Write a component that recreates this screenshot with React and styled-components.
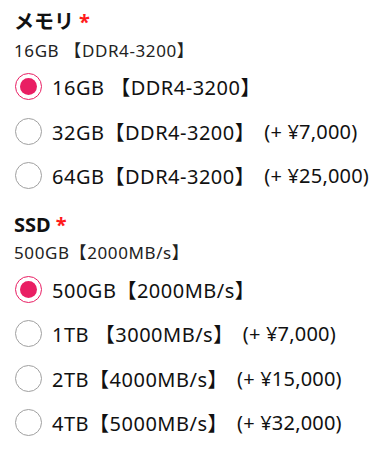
import React, { useState } from 'react';
import styled, { createGlobalStyle } from 'styled-components';

const GlobalStyle = createGlobalStyle`
  body {
    margin: 0;
    background: #ffffff;
    font-family: "Noto Sans", "Noto Sans CJK JP", sans-serif;
    color: #1a1a1a;
  }
`;

const Page = styled.div`
  padding: 8px 14px 0 14px;
`;

const Section = styled.div`
  margin-bottom: 12.5px;
`;

const Title = styled.div`
  font-size: 20px;
  font-weight: 700;
  line-height: 28px;
  color: #111;
  display: flex;
  align-items: center;
`;

const Required = styled.span`
  color: #ff1a1a;
  margin-left: 5px;
  font-weight: 700;
`;

const Current = styled.div`
  font-size: 17px;
  line-height: 22px;
  margin-top: 3.5px;
  margin-bottom: 3px;
  color: #222;
  letter-spacing: 0.6px;
`;

const OptionRow = styled.label`
  display: flex;
  align-items: center;
  height: 44.5px;
  cursor: pointer;
  font-size: 20px;
  letter-spacing: 0.5px;
  color: #111;
  white-space: nowrap;
`;

const Radio = styled.span`
  box-sizing: border-box;
  width: 27px;
  height: 27px;
  border-radius: 50%;
  border: 1px solid ${(p) => (p.$checked ? '#e91e63' : '#a0a0a0')};
  display: flex;
  align-items: center;
  justify-content: center;
  margin-left: 1px;
  margin-right: 10px;
  flex-shrink: 0;

  &::after {
    content: '';
    width: 17px;
    height: 17px;
    border-radius: 50%;
    background: #e91e63;
    display: ${(p) => (p.$checked ? 'block' : 'none')};
  }
`;

const Price = styled.span`
  margin-left: 9px;
  letter-spacing: 0.2px;
`;

const groups = [
  {
    id: 'memory',
    title: 'メモリ',
    options: [
      { label: '16GB 【DDR4-3200】', price: null },
      { label: '32GB【DDR4-3200】', price: '(+ ¥7,000)' },
      { label: '64GB【DDR4-3200】', price: '(+ ¥25,000)' },
    ],
  },
  {
    id: 'ssd',
    title: 'SSD',
    options: [
      { label: '500GB【2000MB/s】', price: null },
      { label: '1TB 【3000MB/s】', price: '(+ ¥7,000)' },
      { label: '2TB【4000MB/s】', price: '(+ ¥15,000)' },
      { label: '4TB【5000MB/s】', price: '(+ ¥32,000)' },
    ],
  },
];

const OptionGroup = ({ group, selected, onSelect }) => (
  <Section>
    <Title>
      {group.title}
      <Required>*</Required>
    </Title>
    <Current>{group.options[selected].label}</Current>
    {group.options.map((opt, i) => (
      <OptionRow key={opt.label} onClick={() => onSelect(i)}>
        <Radio $checked={selected === i} />
        <span>{opt.label}</span>
        {opt.price && <Price>{opt.price}</Price>}
      </OptionRow>
    ))}
  </Section>
);

const App = () => {
  const [selection, setSelection] = useState({ memory: 0, ssd: 0 });

  return (
    <Page>
      <GlobalStyle />
      {groups.map((g) => (
        <OptionGroup
          key={g.id}
          group={g}
          selected={selection[g.id]}
          onSelect={(i) => setSelection({ ...selection, [g.id]: i })}
        />
      ))}
    </Page>
  );
};

export default App;
